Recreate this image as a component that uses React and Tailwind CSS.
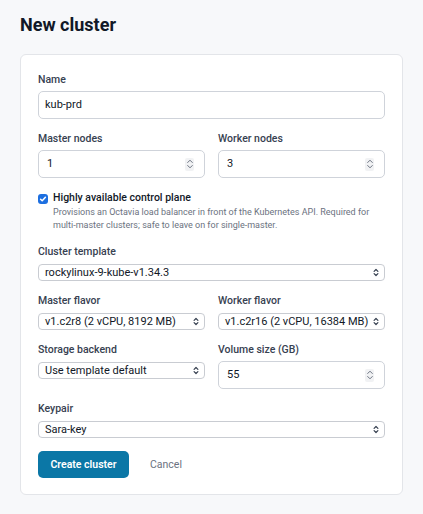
import React from "react";

const font = { fontFamily: "Roboto, 'Noto Sans', sans-serif" };

function Chevrons() {
  return (
    <svg width="6" height="9" viewBox="0 0 6 9" fill="none" stroke="#374151" strokeWidth="1.2" strokeLinecap="round" strokeLinejoin="round">
      <path d="M1.1 3.4 L3 1.5 L4.9 3.4" />
      <path d="M1.1 5.6 L3 7.5 L4.9 5.6" />
    </svg>
  );
}

function Spinner() {
  return (
    <div className="w-[9px] h-[13px] bg-[#f1f2f4] rounded-[2px] flex items-center justify-center">
      <svg width="8" height="12" viewBox="0 0 8 12" fill="none" stroke="#6b7280" strokeWidth="1" strokeLinecap="round" strokeLinejoin="round">
        <path d="M1.7 4.5 L4 2.2 L6.3 4.5" />
        <path d="M1.7 7.5 L4 9.8 L6.3 7.5" />
      </svg>
    </div>
  );
}

function Label({ children, mb = "mb-[3px]" }) {
  return <div className={`text-[10.5px] leading-4 font-medium text-[#374151] ${mb}`}>{children}</div>;
}

function TextInput({ value }) {
  return (
    <div className="h-[28px] border border-[#cfd3da] rounded-[5px] bg-white flex items-center px-[6px] text-[11px] text-[#111827]">
      {value}
    </div>
  );
}

function NumberInput({ value }) {
  return (
    <div className="h-[28px] border border-[#cfd3da] rounded-[5px] bg-white flex items-center justify-between pl-[8px] pr-[10px] text-[11px] text-[#111827]">
      <span>{value}</span>
      <Spinner />
    </div>
  );
}

function Select({ value }) {
  return (
    <div className="h-[17px] border border-[#c9ccd2] rounded-[4px] bg-white flex items-center justify-between pl-[6px] pr-[5px] text-[11px] text-[#111827] leading-none">
      <span className="whitespace-nowrap">{value}</span>
      <Chevrons />
    </div>
  );
}

export default function App() {
  return (
    <div className="min-h-[514px] bg-[#f7f8fa] px-5 pt-[12px] pb-5" style={font}>
      <h1 className="text-[18px] leading-[26px] font-bold text-[#111827] mb-[16px]">New cluster</h1>
      <div className="bg-white border border-[#e3e5e9] rounded-[6px] px-[17px] pt-[17px] pb-[16px]">
        <div className="flex flex-col gap-3">
          <div>
            <Label>Name</Label>
            <TextInput value="kub-prd" />
          </div>
          <div className="grid grid-cols-2 gap-[13px]">
            <div>
              <Label>Master nodes</Label>
              <NumberInput value="1" />
            </div>
            <div>
              <Label>Worker nodes</Label>
              <NumberInput value="3" />
            </div>
          </div>
          <div className="flex gap-[5px]">
            <div className="w-[10px] h-[10px] mt-[4px] rounded-[3px] bg-[#1d6fe0] flex items-center justify-center shrink-0">
              <svg width="8" height="8" viewBox="0 0 8 8" fill="none" stroke="white" strokeWidth="1.5" strokeLinecap="round" strokeLinejoin="round">
                <path d="M1.6 4.2 L3.2 5.8 L6.4 2.2" />
              </svg>
            </div>
            <div>
              <div className="text-[10.5px] leading-4 font-medium text-[#111827]">Highly available control plane</div>
              <div className="text-[9px] leading-[13px] text-[#6b7280]">
                Provisions an Octavia load balancer in front of the Kubernetes API. Required for multi-master clusters; safe to leave on for single-master.
              </div>
            </div>
          </div>
          <div>
            <Label mb="mb-[4px]">Cluster template</Label>
            <Select value="rockylinux-9-kube-v1.34.3" />
          </div>
          <div className="grid grid-cols-2 gap-[13px]">
            <div>
              <Label mb="mb-[4px]">Master flavor</Label>
              <Select value="v1.c2r8 (2 vCPU, 8192 MB)" />
            </div>
            <div>
              <Label mb="mb-[4px]">Worker flavor</Label>
              <Select value="v1.c2r16 (2 vCPU, 16384 MB)" />
            </div>
          </div>
          <div className="grid grid-cols-2 gap-[13px]">
            <div>
              <Label mb="mb-[4px]">Storage backend</Label>
              <Select value="Use template default" />
            </div>
            <div>
              <Label>Volume size (GB)</Label>
              <NumberInput value="55" />
            </div>
          </div>
          <div>
            <Label mb="mb-[4px]">Keypair</Label>
            <Select value="Sara-key" />
          </div>
          <div className="flex items-center gap-[21px] pt-[1px]">
            <button className="h-[27px] w-[91px] rounded-[5px] bg-[#0b77a6] text-white text-[10.5px] font-semibold">Create cluster</button>
            <span className="text-[10.5px] text-[#6b7280]">Cancel</span>
          </div>
        </div>
      </div>
    </div>
  );
}
